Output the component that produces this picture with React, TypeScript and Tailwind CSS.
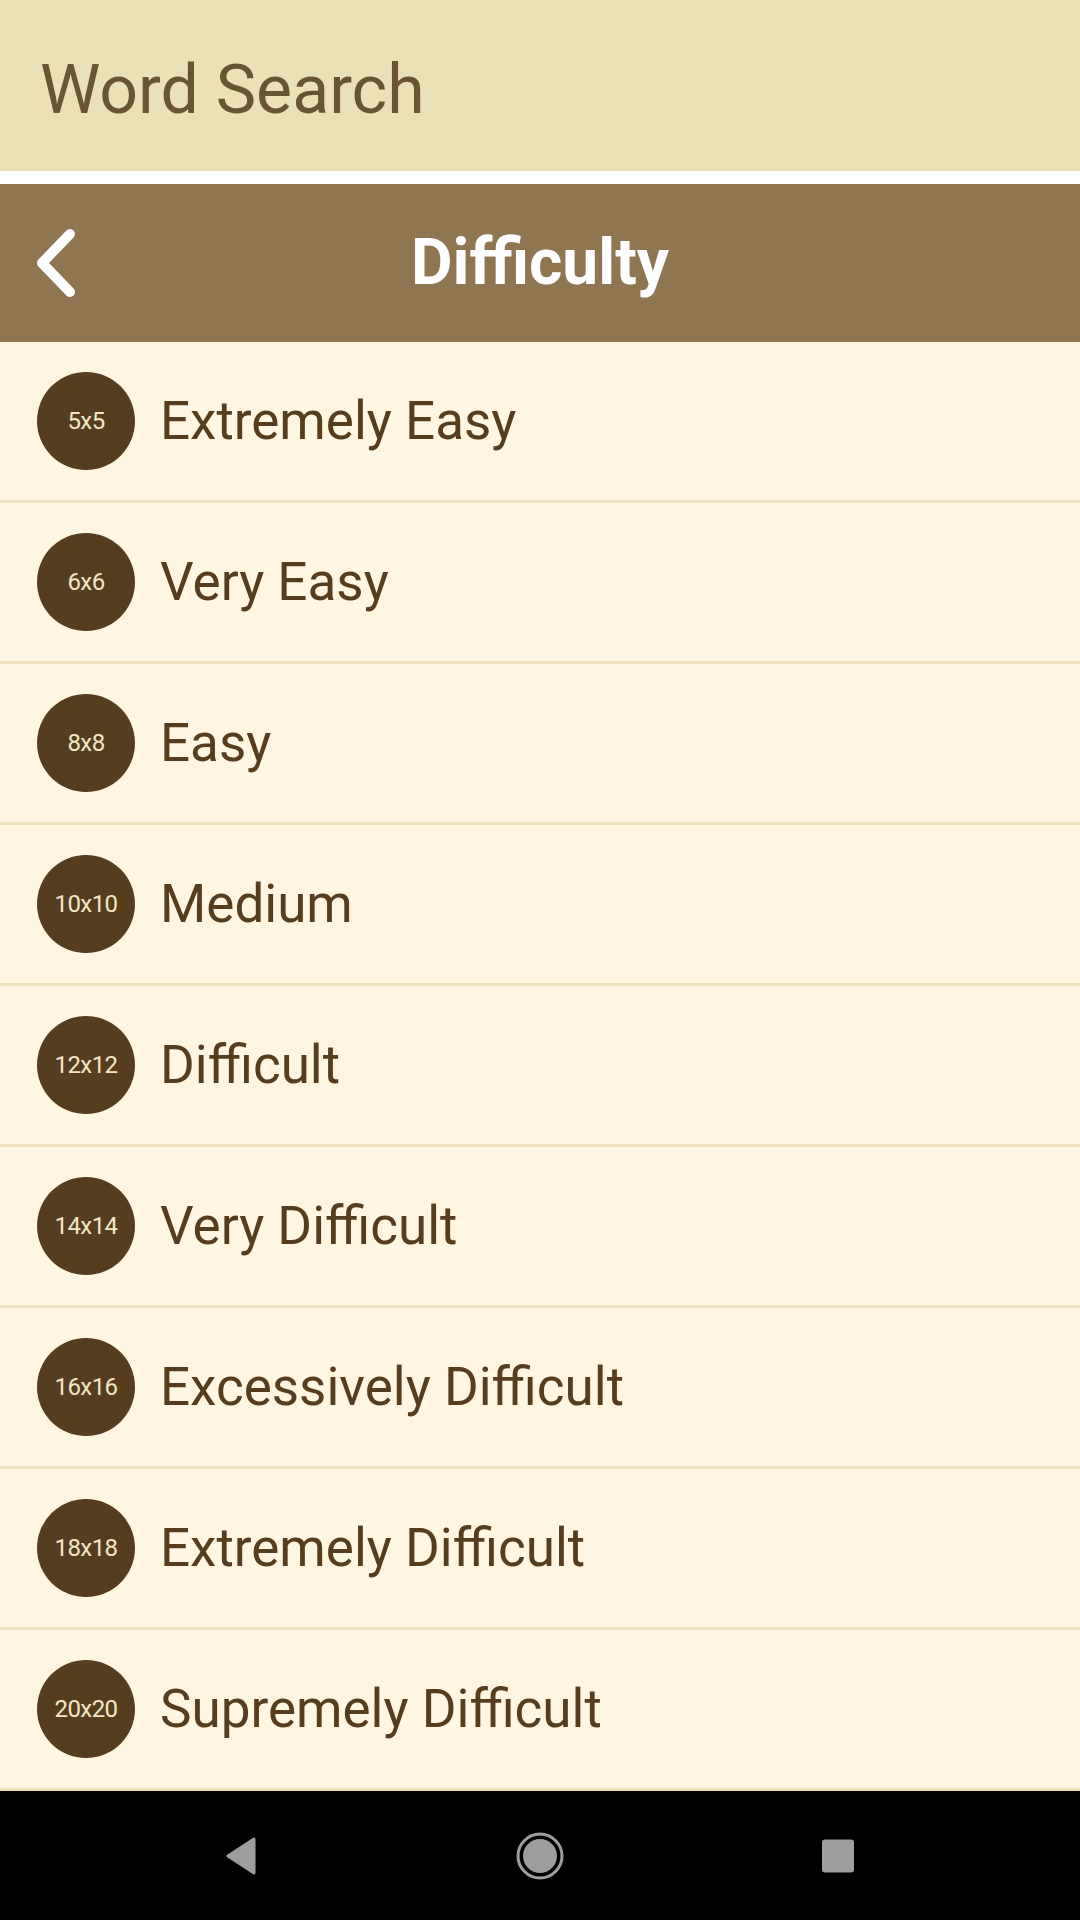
import React from "react";

const levels = [
  { size: "5x5", name: "Extremely Easy" },
  { size: "6x6", name: "Very Easy" },
  { size: "8x8", name: "Easy" },
  { size: "10x10", name: "Medium" },
  { size: "12x12", name: "Difficult" },
  { size: "14x14", name: "Very Difficult" },
  { size: "16x16", name: "Excessively Difficult" },
  { size: "18x18", name: "Extremely Difficult" },
  { size: "20x20", name: "Supremely Difficult" },
];

const App = () => {
  return (
    <div className="w-[1080px] h-[1920px] flex flex-col bg-white font-['Roboto',sans-serif] overflow-hidden">
      {/* App bar */}
      <div className="h-[171px] bg-[#ece0b6] flex items-center pl-[40px] pt-[8px]">
        <h1 className="text-[68px] leading-none text-[#6a5532] font-normal">Word Search</h1>
      </div>

      {/* Difficulty header */}
      <div className="mt-[13px] h-[158px] bg-[#8f7650] relative flex items-center justify-center">
        <button className="absolute left-[32px] top-1/2 -translate-y-1/2 w-[50px] h-[80px] flex items-center justify-center">
          <svg width="50" height="80" viewBox="0 0 50 80">
            <path d="M38 11 L10 40 L38 69" fill="none" stroke="#ffffff" strokeWidth="10" strokeLinecap="round" strokeLinejoin="round" />
          </svg>
        </button>
        <h2 className="text-[64px] leading-none font-bold text-white">Difficulty</h2>
      </div>

      {/* Levels */}
      <div className="bg-[#fef6e0] flex flex-col">
        {levels.map((lvl) => (
          <div key={lvl.size} className="h-[161px] border-b-[3px] border-[#ede2bc] flex items-center pl-[37px]">
            <div className="w-[98px] h-[98px] rounded-full bg-[#553d1e] flex items-center justify-center shrink-0">
              <span className="text-[24px] text-[#f3e6c4] tracking-tight">{lvl.size}</span>
            </div>
            <span className="ml-[25px] text-[53px] text-[#553d1e] leading-none">{lvl.name}</span>
          </div>
        ))}
      </div>

      {/* Android nav bar */}
      <div className="flex-1 bg-black flex items-center justify-center relative">
        <div className="absolute left-[224px] top-1/2 -translate-y-1/2">
          <svg width="34" height="38" viewBox="0 0 34 38">
            <path d="M30 2 L4 19 L30 36 Z" fill="#9e9e9e" stroke="#9e9e9e" strokeWidth="3" strokeLinejoin="round" />
          </svg>
        </div>
        <div className="absolute left-[516px] top-1/2 -translate-y-1/2">
          <svg width="48" height="48" viewBox="0 0 48 48">
            <circle cx="24" cy="24" r="22" fill="none" stroke="#9e9e9e" strokeWidth="3" />
            <circle cx="24" cy="24" r="17" fill="#9e9e9e" />
          </svg>
        </div>
        <div className="absolute left-[822px] top-1/2 -translate-y-1/2 w-[32px] h-[33px] rounded-[3px] bg-[#9e9e9e]" />
      </div>
    </div>
  );
};

export default App;
